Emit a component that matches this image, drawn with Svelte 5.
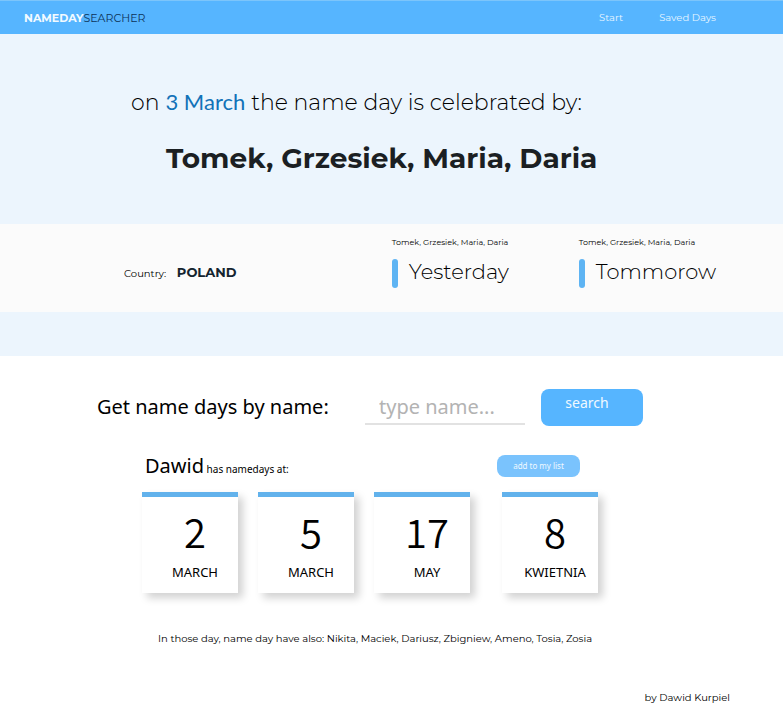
<script>
  const names = 'Tomek, Grzesiek, Maria, Daria';
  const neighbours = ['Yesterday', 'Tommorow'];
  const results = [
    { day: 2, month: 'MARCH' },
    { day: 5, month: 'MARCH' },
    { day: 17, month: 'MAY' },
    { day: 8, month: 'KWIETNIA' }
  ];
  let query = $state('');
</script>

<div class="page">
  <header>
    <a class="logo" href="#start"><b>NAMEDAY</b>SEARCHER</a>
    <nav>
      <a href="#start">Start</a>
      <a href="#saved">Saved Days</a>
    </nav>
  </header>

  <main>
    <section class="hero">
      <p class="intro">
        <span>on</span>
        <span class="date">3 March</span>
        <span>the name day is celebrated by:</span>
      </p>
      <h1>{names}</h1>
    </section>

    <section class="band">
      <p class="country">Country: <strong>POLAND</strong></p>
      <div class="days">
        {#each neighbours as label}
          <article>
            <p>{names}</p>
            <h2>{label}</h2>
          </article>
        {/each}
      </div>
    </section>

    <section class="finder">
      <form onsubmit={(e) => e.preventDefault()}>
        <label for="name">Get name days by name:</label>
        <input id="name" type="text" placeholder="type name..." bind:value={query} />
        <button class="search" type="submit">search</button>
      </form>

      <div class="results">
        <div class="summary">
          <p><span class="who">Dawid</span> has namedays at:</p>
          <button class="add" type="button">add to my list</button>
        </div>
        <ul>
          {#each results as { day, month }}
            <li>
              <span class="number">{day}</span>
              <span>{month}</span>
            </li>
          {/each}
        </ul>
      </div>

      <p class="also">In those day, name day have also: Nikita, Maciek, Dariusz, Zbigniew, Ameno, Tosia, Zosia</p>
    </section>
  </main>

  <footer>by Dawid Kurpiel</footer>
</div>

<style>
  :global(body) {
    margin: 0;
    background: #fff;
  }

  .page {
    font-family: Montserrat, Inter, sans-serif;
    font-size: 10px;
    line-height: 16px;
    color: #000;
  }

  p, h1, h2, ul {
    margin: 0;
    padding: 0;
  }

  a {
    color: inherit;
    text-decoration: none;
  }

  header {
    display: flex;
    justify-content: space-between;
    align-items: center;
    box-sizing: border-box;
    height: 34px;
    padding: 0 67px 0 24px;
    background: #56b5ff;
    border-top: 1px solid #7cc5fb;
  }

  .logo {
    font-size: 11px;
    color: #0d3358;
  }

  .logo b {
    color: #f2faff;
  }

  nav {
    display: flex;
    gap: 36px;
    color: #e8f5ff;
  }

  .hero {
    padding: 53px 24px 46px 131px;
    background: #ecf5fd;
  }

  .intro {
    display: flex;
    align-items: baseline;
    gap: 6px;
    height: 30px;
    font-size: 22px;
    font-weight: 300;
    line-height: 30px;
  }

  .date {
    font-family: Lato, sans-serif;
    font-weight: 400;
    color: #1272b8;
  }

  h1 {
    margin: 21px 0 0 35px;
    font-size: 28px;
    font-weight: 700;
    line-height: 40px;
    color: #1b1f23;
  }

  .band {
    display: flex;
    justify-content: space-between;
    padding: 12px 67px 24px 124px;
    background: #fbfbfb;
    border-bottom: 44px solid #ecf5fd;
  }

  .country {
    padding-top: 24px;
    line-height: 24px;
  }

  .country strong {
    margin-left: 8px;
    font-size: 13px;
    color: #14242f;
  }

  .days {
    display: flex;
    gap: 70px;
  }

  .days p {
    margin-bottom: 11px;
    font-size: 8px;
    line-height: 12px;
  }

  h2 {
    display: flex;
    gap: 11px;
    font-size: 21px;
    font-weight: 300;
    line-height: 26px;
  }

  h2::before {
    content: '';
    width: 6px;
    height: 29px;
    border-radius: 3px;
    background: #5eb4f3;
  }

  .finder {
    padding: 33px 24px 0 97px;
    font-family: 'Noto Sans', sans-serif;
  }

  form {
    display: flex;
    font-size: 20px;
  }

  label {
    width: 268px;
    line-height: 35px;
  }

  input {
    box-sizing: border-box;
    width: 160px;
    height: 36px;
    padding: 0 0 0 14px;
    border: 0;
    border-bottom: 2px solid #e2e2e2;
    background: none;
    font: inherit;
    outline: 0;
  }

  input::placeholder {
    color: #b3b3b3;
    opacity: 1;
  }

  button {
    border: 0;
    border-radius: 8px;
    font-family: inherit;
    color: #f0f9ff;
    cursor: pointer;
  }

  .search {
    width: 102px;
    height: 37px;
    margin-left: 16px;
    padding: 0 10px 10px 0;
    background: #56b5ff;
    font-size: 14px;
  }

  .results {
    width: 456px;
    margin: 29px 0 0 45px;
  }

  .summary {
    display: flex;
    justify-content: space-between;
    padding: 0 18px 12px 3px;
  }

  .summary p {
    line-height: 22px;
  }

  .who {
    font-size: 20px;
  }

  .add {
    width: 83px;
    height: 22px;
    padding: 0 0 2px;
    background: #7ac3fd;
    font-size: 8px;
  }

  ul {
    display: flex;
    gap: 20px;
    list-style: none;
  }

  li {
    display: flex;
    flex-direction: column;
    align-items: center;
    box-sizing: border-box;
    width: 96px;
    height: 101px;
    padding: 13px 0 0 10px;
    border-top: 5px solid #62b2ec;
    background: #fff;
    box-shadow: 5px 5px 8px rgba(0, 0, 0, 0.18);
    font-size: 13px;
    line-height: 20px;
  }

  li:last-child {
    margin-left: auto;
  }

  .number {
    margin-bottom: 10px;
    font-family: 'Noto Sans CJK JP', sans-serif;
    font-size: 40px;
    font-weight: 350;
    line-height: 42px;
  }

  .also {
    margin: 38px 0 0 61px;
    font-family: Montserrat, Inter, sans-serif;
  }

  footer {
    padding: 43px 53px 19px;
    text-align: right;
  }
</style>
